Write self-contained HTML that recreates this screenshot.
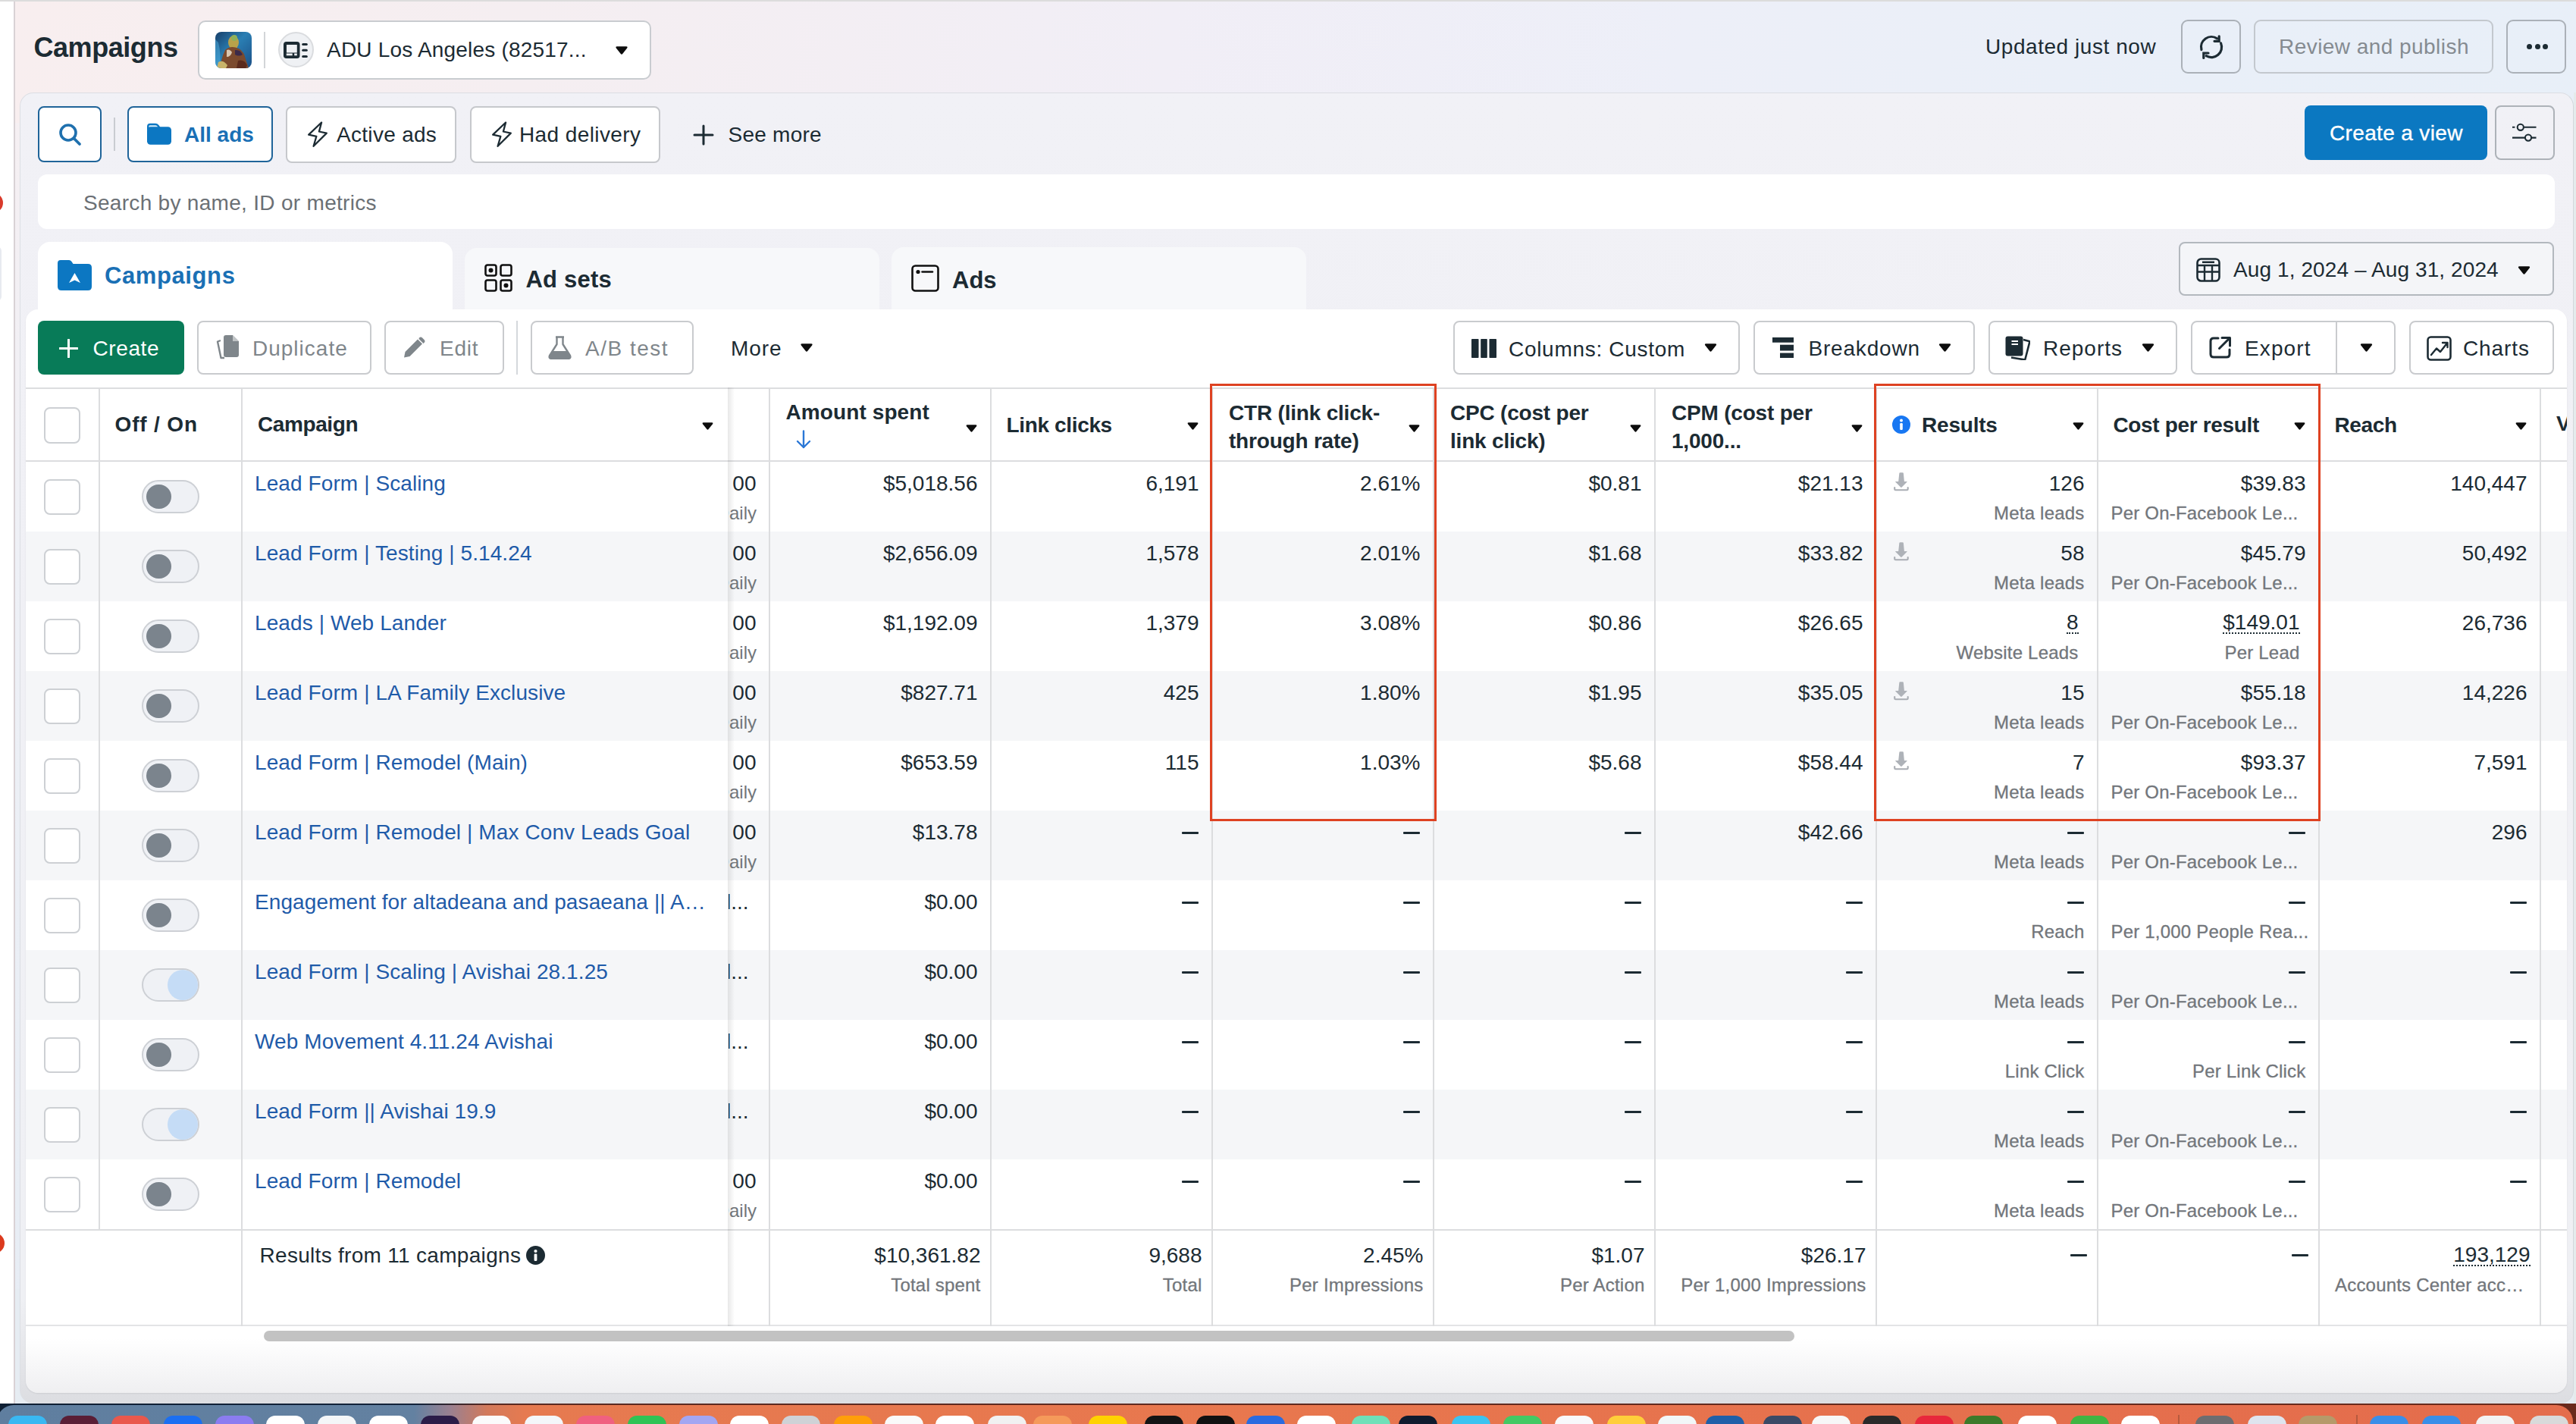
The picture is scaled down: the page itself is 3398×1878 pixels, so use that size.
<!DOCTYPE html><html><head><meta charset="utf-8"><title>Campaigns</title><style>
*{box-sizing:border-box;margin:0;padding:0}
html,body{width:3398px;height:1878px;overflow:hidden;background:#fff;font-family:"Liberation Sans",sans-serif;color:#1c2b33;position:relative}
.a{position:absolute}
.t{position:absolute;white-space:nowrap;line-height:1}
svg.a{display:block}
</style></head><body>
<div class="a" style="left:0px;top:0px;width:3398px;height:2px;background:#dcdcdc"></div>
<div class="a" style="left:18px;top:2px;width:1.5px;height:1850px;background:#d9d2d5"></div>
<div class="a" style="left:19.5px;top:2px;width:6px;height:1850px;background:linear-gradient(180deg,#f7eff1 0%,#eef0f6 40%,#e6ecf4 100%)"></div>
<div class="a" style="left:19.5px;top:2px;width:3378.5px;height:160px;background:linear-gradient(95deg,#f8eeef 0%,#f5eef1 20%,#f1eef6 45%,#edeff8 65%,#e9eff8 85%,#e8eff8 100%)"></div>
<div class="a" style="left:19.5px;top:1700px;width:3378.5px;height:152px;background:#e6ecf2"></div>
<div class="a" style="left:25.5px;top:122px;width:3369px;height:1729px;background:linear-gradient(180deg,#f1f1f6 0%,#f0f0f5 40%,#eff0f4 92%,#dcdde1 100%);border-top:1.5px solid #dcdee3;border-left:1.5px solid #dcdfe4;border-right:1.5px solid #d3d7db;border-radius:18px 18px 18px 18px"></div>
<div class="a" style="left:3395px;top:122px;width:3px;height:1730px;background:#e4ebec"></div>
<div class="a" style="left:-23px;top:254px;width:27px;height:27px;background:#d93a2b;border-radius:50%"></div>
<div class="a" style="left:-21px;top:1626px;width:27px;height:27px;background:#dc3a1e;border-radius:50%"></div>
<div class="a" style="left:-10px;top:325px;width:12px;height:72px;background:#e7eaf0;border-radius:6px"></div>
<div class="t" style="left:44.5px;top:44.5px;font-size:36px;color:#1c2b33;font-weight:bold;letter-spacing:-0.45px;">Campaigns</div>
<div class="a" style="left:261px;top:27px;width:598px;height:78px;background:#fff;border:2px solid #c9ccd0;border-radius:10px"></div>
<svg class="a" style="left:284px;top:42px;" width="48" height="48" viewBox="0 0 48 48"><defs><linearGradient id="avb" x1="0" y1="0" x2="1" y2="1"><stop offset="0" stop-color="#173f6a"/><stop offset="0.45" stop-color="#2a7fb4"/><stop offset="1" stop-color="#1c4f86"/></linearGradient><clipPath id="avc"><rect width="48" height="48" rx="8"/></clipPath></defs><g clip-path="url(#avc)"><rect width="48" height="48" fill="url(#avb)"/><path d="M4 14 Q8 30 6 48 H0 V10Z" fill="#4fb0df" opacity="0.5"/><ellipse cx="24" cy="14" rx="7" ry="9" fill="#b9a24a"/><ellipse cx="25" cy="8" rx="4" ry="4" fill="#8fb05a"/><path d="M13 24 Q20 17 31 22 Q38 26 40 36 L44 48 H8 Q6 38 13 24Z" fill="#7b4a2e"/><path d="M15 24 Q19 22 22 27 Q20 33 15 33Z" fill="#d9c6b0"/><path d="M26 24 Q33 23 36 30 Q31 33 26 30Z" fill="#3b2a4a"/><path d="M4 40 Q10 36 16 44 L14 48 H2Z" fill="#c9b46a"/><path d="M30 38 Q38 36 42 44 L40 48 H28Z" fill="#5a2a1c"/></g></svg>
<div class="a" style="left:348px;top:42px;width:2px;height:48px;background:#d3d5d8"></div>
<div class="a" style="left:366.5px;top:42.3px;width:47.2px;height:47.2px;background:#eff1f4;border:2px solid #dadcdf;border-radius:50%"></div>
<svg class="a" style="left:374px;top:55px;" width="33" height="23" viewBox="0 0 33 23"><path fill-rule="evenodd" fill="#1c2b33" d="M3.8 0 H17.7 Q21.5 0 21.5 3.8 V18.2 Q21.5 22 17.7 22 H3.8 Q0 22 0 18.2 V3.8 Q0 0 3.8 0Z M4 4 V14.5 H17.8 V4Z M3.8 15.6 V18.3 H11.7 V15.6Z M14.2 15.6 V18.3 H17.8 V15.6Z"/><rect x="24.2" y="2" width="7.6" height="3" rx="1.5" fill="#1c2b33"/><rect x="24.2" y="9.8" width="7.6" height="3" rx="1.5" fill="#1c2b33"/><rect x="24.2" y="18" width="7.6" height="3" rx="1.5" fill="#1c2b33"/></svg>
<div class="t" style="left:431px;top:52.3px;font-size:28px;color:#1c2b33;letter-spacing:0.2px;">ADU Los Angeles (82517...</div>
<svg class="a" style="left:811px;top:61px;" width="18" height="11" viewBox="0 0 15 10"><path d="M2 0.3 H13 Q15.2 0.3 14 2.2 L8.6 9.1 Q7.5 10.3 6.4 9.1 L1 2.2 Q-0.2 0.3 2 0.3Z" fill="#0d0d0d"/></svg>
<div class="t" style="left:2619px;top:48.3px;font-size:28px;color:#1c2b33;letter-spacing:0.55px;">Updated just now</div>
<div class="a" style="left:2877px;top:26px;width:79px;height:71px;border:2px solid #abb1b8;border-radius:9px"></div>
<svg class="a" style="left:2899px;top:44px;" width="36" height="36" viewBox="0 0 36 36"><path d="M4.96 21.5 A13.5 13.5 0 0 1 25.7 6.9" fill="none" stroke="#1c2b33" stroke-width="3.2" stroke-linecap="round"/><path d="M22 10.3 H28.2 V3.8" fill="none" stroke="#1c2b33" stroke-width="3.2" stroke-linecap="round" stroke-linejoin="miter"/><path d="M30.6 13 A13.5 13.5 0 0 1 11.2 29.7" fill="none" stroke="#1c2b33" stroke-width="3.2" stroke-linecap="round"/><path d="M14 26 H7.8 V32.4" fill="none" stroke="#1c2b33" stroke-width="3.2" stroke-linecap="round"/></svg>
<div class="a" style="left:2973px;top:26px;width:316px;height:71px;border:2px solid #c3c8ce;border-radius:9px"></div>
<div class="t" style="left:3006px;top:48.3px;font-size:28px;color:#858b91;letter-spacing:0.45px;">Review and publish</div>
<div class="a" style="left:3306px;top:26px;width:79px;height:71px;border:2px solid #abb1b8;border-radius:9px"></div>
<div class="a" style="left:3333.0px;top:58px;width:7px;height:7px;background:#1c2b33;border-radius:50%"></div>
<div class="a" style="left:3343.5px;top:58px;width:7px;height:7px;background:#1c2b33;border-radius:50%"></div>
<div class="a" style="left:3354.0px;top:58px;width:7px;height:7px;background:#1c2b33;border-radius:50%"></div>
<div class="a" style="left:50px;top:140px;width:84px;height:74px;background:#fff;border:2px solid #1f6499;border-radius:8px"></div>
<svg class="a" style="left:76px;top:161px;" width="34" height="34" viewBox="0 0 34 34"><circle cx="14" cy="14" r="10" fill="none" stroke="#1f70ae" stroke-width="3.6"/><path d="M21.5 21.5 L29 29" stroke="#1f70ae" stroke-width="3.8" stroke-linecap="round"/></svg>
<div class="a" style="left:150px;top:155px;width:2px;height:44px;background:#c9ccd1"></div>
<div class="a" style="left:168px;top:139.5px;width:192px;height:74px;background:#fff;border:2px solid #1f6499;border-radius:8px"></div>
<svg class="a" style="left:193px;top:162px;" width="34" height="30" viewBox="0 0 34 30"><path d="M2.2 9 V5 Q2.2 2 5.2 2 H12 Q14 2 15.3 3.6 L17.5 6.5" fill="#d9eefa" stroke="#0c77c2" stroke-width="2.4" stroke-linejoin="round"/><rect x="1" y="5.2" width="32" height="23.6" rx="4.5" fill="#0c77c2"/></svg>
<div class="t" style="left:243px;top:163.8px;font-size:28px;color:#1a70b5;font-weight:bold;">All ads</div>
<div class="a" style="left:377px;top:139.5px;width:225px;height:75px;background:#fff;border:2px solid #c6c8cc;border-radius:8px"></div>
<svg class="a" style="left:405px;top:159px;" width="28" height="36" viewBox="0 0 28 36"><path d="M19.1 2.5 L2.2 18.7 L12.4 20.8 L8.6 33.8 L25.8 16.6 L15.9 14.5 Z" fill="none" stroke="#1c2b33" stroke-width="2.3" stroke-linejoin="round"/></svg>
<div class="t" style="left:444px;top:163.8px;font-size:28px;color:#1c2b33;letter-spacing:0.3px;">Active ads</div>
<div class="a" style="left:620px;top:139.5px;width:251px;height:75px;background:#fff;border:2px solid #c6c8cc;border-radius:8px"></div>
<svg class="a" style="left:648px;top:159px;" width="28" height="36" viewBox="0 0 28 36"><path d="M19.1 2.5 L2.2 18.7 L12.4 20.8 L8.6 33.8 L25.8 16.6 L15.9 14.5 Z" fill="none" stroke="#1c2b33" stroke-width="2.3" stroke-linejoin="round"/></svg>
<div class="t" style="left:685px;top:163.8px;font-size:28px;color:#1c2b33;letter-spacing:0.4px;">Had delivery</div>
<svg class="a" style="left:914px;top:164px;" width="28" height="28" viewBox="0 0 28 28"><path d="M14 2 V26 M2 14 H26" stroke="#1c2b33" stroke-width="3" stroke-linecap="round"/></svg>
<div class="t" style="left:960.5px;top:164.3px;font-size:28px;color:#1c2b33;letter-spacing:0.25px;">See more</div>
<div class="a" style="left:3040px;top:139px;width:241px;height:72px;background:#0b78c1;border-radius:8px"></div>
<div class="t" style="left:3073px;top:162.3px;font-size:28px;color:#fff;letter-spacing:0.35px;-webkit-text-stroke:0.35px #fff;">Create a view</div>
<div class="a" style="left:3290.5px;top:139px;width:79px;height:72px;border:2px solid #adb2b8;border-radius:8px"></div>
<svg class="a" style="left:3312px;top:160px;" width="36" height="30" viewBox="0 0 36 30"><path d="M2 7.8 H5.4 M17.3 7.8 H33.5 M2 21.6 H18.2 M27.5 21.6 H33.5" stroke="#1c2b33" stroke-width="2.1"/><circle cx="12.8" cy="7.8" r="4.1" fill="none" stroke="#1c2b33" stroke-width="2.1"/><circle cx="23" cy="21.6" r="4.1" fill="none" stroke="#1c2b33" stroke-width="2.1"/></svg>
<div class="a" style="left:50px;top:230px;width:3320px;height:72px;background:#fff;border-radius:12px"></div>
<div class="t" style="left:110px;top:253.8px;font-size:28px;color:#6b7075;letter-spacing:0.3px;">Search by name, ID or metrics</div>
<div class="a" style="left:613px;top:327px;width:547px;height:90px;background:#f7f8fa;border-radius:16px 16px 0 0"></div>
<div class="a" style="left:1176px;top:326px;width:547px;height:90px;background:#f7f8fa;border-radius:16px 16px 0 0"></div>
<div class="a" style="left:50px;top:319px;width:547px;height:100px;background:#fff;border-radius:16px 16px 0 0"></div>
<svg class="a" style="left:76px;top:343px;" width="45" height="40" viewBox="0 0 45 40"><path d="M0 4 Q0 0 4 0 H15 Q17 0 18.5 2 L20.5 5 H40 Q45 5 45 10 V35 Q45 40 40 40 H5 Q0 40 0 35Z" fill="#0c77c2"/><path d="M22.5 17 L30 30 L22.5 26.5 L15 30Z" fill="#fff"/></svg>
<div class="t" style="left:138px;top:347.8px;font-size:31px;color:#1a70b5;font-weight:bold;letter-spacing:0.6px;">Campaigns</div>
<svg class="a" style="left:639px;top:348px;" width="37" height="37" viewBox="0 0 37 37"><rect x="1.5" y="1.5" width="14" height="14" rx="2.5" fill="none" stroke="#111" stroke-width="2.6"/><rect x="21.5" y="1.5" width="14" height="14" rx="2.5" fill="none" stroke="#111" stroke-width="2.6"/><rect x="1.5" y="21.5" width="14" height="14" rx="2.5" fill="none" stroke="#111" stroke-width="2.6"/><rect x="21.5" y="21.5" width="14" height="14" rx="2.5" fill="none" stroke="#111" stroke-width="2.6"/><circle cx="8.5" cy="8.5" r="3" fill="#111"/><circle cx="28.5" cy="28.5" r="3" fill="#111"/></svg>
<div class="t" style="left:693.5px;top:352.8px;font-size:31px;color:#1c2b33;font-weight:bold;letter-spacing:0.2px;">Ad sets</div>
<svg class="a" style="left:1202px;top:349px;" width="37" height="36" viewBox="0 0 37 36"><rect x="1.5" y="1.5" width="34" height="33" rx="4" fill="none" stroke="#111" stroke-width="2.6"/><circle cx="9" cy="9.5" r="2.6" fill="#111"/><path d="M14.5 9.5 H28" stroke="#111" stroke-width="2.6" stroke-linecap="round"/></svg>
<div class="t" style="left:1256px;top:353.8px;font-size:31px;color:#1c2b33;font-weight:bold;">Ads</div>
<div class="a" style="left:2874px;top:319px;width:495px;height:71px;background:#f4f5f8;border:2px solid #b3b8be;border-radius:8px"></div>
<svg class="a" style="left:2897px;top:340px;" width="32" height="32" viewBox="0 0 32 32"><rect x="1.5" y="1.5" width="29" height="29" rx="5" fill="none" stroke="#1c2b33" stroke-width="2.6"/><path d="M1.5 10 H30.5 M1.5 18.5 H30.5 M11 10 V30.5 M21 10 V30.5 M8 5.8 H24" stroke="#1c2b33" stroke-width="2.4"/></svg>
<div class="t" style="left:2946px;top:342.3px;font-size:28px;color:#1c2b33;letter-spacing:0.1px;">Aug 1, 2024 – Aug 31, 2024</div>
<svg class="a" style="left:3320px;top:351px;" width="19" height="11" viewBox="0 0 15 10"><path d="M2 0.3 H13 Q15.2 0.3 14 2.2 L8.6 9.1 Q7.5 10.3 6.4 9.1 L1 2.2 Q-0.2 0.3 2 0.3Z" fill="#0d0d0d"/></svg>
<div class="a" style="left:34px;top:408px;width:3352px;height:1429px;background:linear-gradient(180deg,#fff 0%,#fff 95%,#efeff1 100%);border-radius:16px;box-shadow:0 1px 2px rgba(0,0,0,0.08)"></div>
<div class="a" style="left:50px;top:400px;width:547px;height:30px;background:#fff"></div>
<div class="a" style="left:50px;top:423px;width:193px;height:71px;background:#087b58;border-radius:8px"></div>
<svg class="a" style="left:78px;top:447px;" width="25" height="25" viewBox="0 0 25 25"><path d="M12.5 1 V24 M1 12.5 H24" stroke="#fff" stroke-width="3" stroke-linecap="round"/></svg>
<div class="t" style="left:122.5px;top:445.8px;font-size:28px;color:#fff;letter-spacing:0.6px;">Create</div>
<div class="a" style="left:260px;top:423px;width:230px;height:71px;border:2px solid #c9cbce;border-radius:8px;background:#fff"></div>
<svg class="a" style="left:283px;top:441px;" width="33" height="33" viewBox="0 0 33 33"><path d="M8 8 L4 9.5 L8.5 31 L13 31" fill="none" stroke="#7f868b" stroke-width="2.4" stroke-linejoin="round"/><path d="M12 4 Q12 1 15 1 H24 L32 9 V27 Q32 30 29 30 H15 Q12 30 12 27Z" fill="#7f868b"/><path d="M24 1 V9 H32" fill="#fff" opacity="0.5"/></svg>
<div class="t" style="left:333px;top:445.8px;font-size:28px;color:#7f868b;letter-spacing:1.0px;">Duplicate</div>
<div class="a" style="left:507px;top:423px;width:158px;height:71px;border:2px solid #c9cbce;border-radius:8px;background:#fff"></div>
<svg class="a" style="left:531px;top:443px;" width="31" height="30" viewBox="0 0 31 30"><path d="M2 28.5 L3.5 21 L20 4.5 L26 10.5 L9.5 27Z" fill="#7f868b"/><path d="M22 2.5 Q24 0.5 26 2.5 L28.5 5 Q30.5 7 28.5 9 L27.5 10 L21.5 4Z" fill="#7f868b"/></svg>
<div class="t" style="left:580px;top:445.8px;font-size:28px;color:#7f868b;letter-spacing:0.8px;">Edit</div>
<div class="a" style="left:681px;top:423px;width:2px;height:71px;background:#d5d8dc"></div>
<div class="a" style="left:700px;top:423px;width:215px;height:71px;border:2px solid #c9cbce;border-radius:8px;background:#fff"></div>
<svg class="a" style="left:723px;top:443px;" width="31" height="31" viewBox="0 0 31 31"><path d="M10 1.5 H21 M11.5 1.5 V11 L2 26 Q0.5 30 5 30 H26 Q30.5 30 29 26 L19.5 11 V1.5" fill="none" stroke="#7f868b" stroke-width="2.4" stroke-linejoin="round"/><path d="M6.5 20 H24.5 L29 27 Q30 30 26 30 H5 Q1 30 2 27Z" fill="#7f868b"/></svg>
<div class="t" style="left:772px;top:445.8px;font-size:28px;color:#7f868b;letter-spacing:1.5px;">A/B test</div>
<div class="t" style="left:964px;top:445.8px;font-size:28px;color:#1c2b33;letter-spacing:0.9px;">More</div>
<svg class="a" style="left:1054px;top:453px;" width="20" height="11" viewBox="0 0 15 10"><path d="M2 0.3 H13 Q15.2 0.3 14 2.2 L8.6 9.1 Q7.5 10.3 6.4 9.1 L1 2.2 Q-0.2 0.3 2 0.3Z" fill="#0d0d0d"/></svg>
<div class="a" style="left:1917px;top:423px;width:378px;height:71px;border:2px solid #c9cbce;border-radius:8px;background:#fff"></div>
<svg class="a" style="left:1940.5px;top:446.5px;" width="33" height="25" viewBox="0 0 33 25"><rect x="0" y="0" width="9.5" height="25" rx="0.8" fill="#1c2b33"/><rect x="12.2" y="0" width="8.6" height="25" rx="0.8" fill="#1c2b33"/><rect x="23.5" y="0" width="9.5" height="25" rx="0.8" fill="#1c2b33"/></svg>
<div class="t" style="left:1990px;top:446.5px;font-size:28px;color:#1c2b33;letter-spacing:0.7px;">Columns: Custom</div>
<svg class="a" style="left:2247px;top:453px;" width="19" height="11" viewBox="0 0 15 10"><path d="M2 0.3 H13 Q15.2 0.3 14 2.2 L8.6 9.1 Q7.5 10.3 6.4 9.1 L1 2.2 Q-0.2 0.3 2 0.3Z" fill="#0d0d0d"/></svg>
<div class="a" style="left:2313px;top:423px;width:292px;height:71px;border:2px solid #c9cbce;border-radius:8px;background:#fff"></div>
<svg class="a" style="left:2338px;top:445px;" width="28" height="27" viewBox="0 0 28 27"><rect x="0" y="0" width="28" height="6.7" fill="#1c2b33"/><rect x="10" y="9.7" width="18" height="7.8" fill="#1c2b33"/><rect x="10" y="20.5" width="18" height="6.5" fill="#1c2b33"/></svg>
<div class="t" style="left:2385.5px;top:445.8px;font-size:28px;color:#1c2b33;letter-spacing:0.8px;">Breakdown</div>
<svg class="a" style="left:2556px;top:453px;" width="19" height="11" viewBox="0 0 15 10"><path d="M2 0.3 H13 Q15.2 0.3 14 2.2 L8.6 9.1 Q7.5 10.3 6.4 9.1 L1 2.2 Q-0.2 0.3 2 0.3Z" fill="#0d0d0d"/></svg>
<div class="a" style="left:2623px;top:423px;width:249px;height:71px;border:2px solid #c9cbce;border-radius:8px;background:#fff"></div>
<svg class="a" style="left:2645px;top:442.5px;" width="33" height="32" viewBox="0 0 33 32"><path d="M24 5 L31.5 7 Q32.5 7.3 32.2 8.4 L26.5 30.5 Q26.2 31.6 25 31.3 L8 28.5" fill="none" stroke="#1c2b33" stroke-width="2.6" stroke-linejoin="round"/><rect x="0.5" y="0.5" width="23" height="26" rx="3" fill="#1c2b33"/><path d="M8.5 7 H17 M8.5 11 H17" stroke="#fff" stroke-width="1.8"/></svg>
<div class="t" style="left:2695px;top:445.8px;font-size:28px;color:#1c2b33;letter-spacing:1.0px;">Reports</div>
<svg class="a" style="left:2824px;top:453px;" width="19" height="11" viewBox="0 0 15 10"><path d="M2 0.3 H13 Q15.2 0.3 14 2.2 L8.6 9.1 Q7.5 10.3 6.4 9.1 L1 2.2 Q-0.2 0.3 2 0.3Z" fill="#0d0d0d"/></svg>
<div class="a" style="left:2890px;top:423px;width:270px;height:71px;border:2px solid #c9cbce;border-radius:8px;background:#fff"></div>
<div class="a" style="left:3081px;top:425px;width:2px;height:67px;background:#c9cbce"></div>
<svg class="a" style="left:2914px;top:443px;" width="30" height="30" viewBox="0 0 30 30"><path d="M12 3 H6 Q2 3 2 7 V24 Q2 28 6 28 H23 Q27 28 27 24 V18" fill="none" stroke="#1c2b33" stroke-width="3" stroke-linecap="round"/><path d="M17 2.5 H27.5 V13 M27 3 L13.5 16.5" fill="none" stroke="#1c2b33" stroke-width="3" stroke-linecap="round" stroke-linejoin="round"/></svg>
<div class="t" style="left:2961px;top:445.8px;font-size:28px;color:#1c2b33;letter-spacing:1.1px;">Export</div>
<svg class="a" style="left:3112px;top:453px;" width="19" height="11" viewBox="0 0 15 10"><path d="M2 0.3 H13 Q15.2 0.3 14 2.2 L8.6 9.1 Q7.5 10.3 6.4 9.1 L1 2.2 Q-0.2 0.3 2 0.3Z" fill="#0d0d0d"/></svg>
<div class="a" style="left:3178px;top:423px;width:191px;height:71px;border:2px solid #c9cbce;border-radius:8px;background:#fff"></div>
<svg class="a" style="left:3200.5px;top:443px;" width="33" height="33" viewBox="0 0 33 33"><rect x="1.5" y="1.5" width="30" height="30" rx="4" fill="none" stroke="#1c2b33" stroke-width="2.6"/><path d="M6 25 L13 16.5 L18 21 L27 9.5 M21 9 H27.5 V15" fill="none" stroke="#1c2b33" stroke-width="2.4" stroke-linejoin="round" stroke-linecap="round"/></svg>
<div class="t" style="left:3249px;top:445.8px;font-size:28px;color:#1c2b33;letter-spacing:0.9px;">Charts</div>
<div class="a" style="left:34px;top:511px;width:3352px;height:2px;background:#dcdddf"></div>
<div class="a" style="left:34px;top:607px;width:3352px;height:2px;background:#dcdddf"></div>
<div class="a" style="left:34px;top:701px;width:3352px;height:92px;background:#f5f6f8"></div>
<div class="a" style="left:34px;top:885px;width:3352px;height:92px;background:#f5f6f8"></div>
<div class="a" style="left:34px;top:1069px;width:3352px;height:92px;background:#f5f6f8"></div>
<div class="a" style="left:34px;top:1253px;width:3352px;height:92px;background:#f5f6f8"></div>
<div class="a" style="left:34px;top:1437px;width:3352px;height:92px;background:#f5f6f8"></div>
<div class="a" style="left:34px;top:1621px;width:3352px;height:2px;background:#dcdddf"></div>
<div class="a" style="left:34px;top:1747px;width:3352px;height:2px;background:#e3e4e6"></div>
<div class="a" style="left:130px;top:511px;width:2px;height:1112px;background:#dcdddf"></div>
<div class="a" style="left:318px;top:511px;width:2px;height:1238px;background:#dcdddf"></div>
<div class="a" style="left:1014px;top:511px;width:2px;height:1238px;background:#dcdddf"></div>
<div class="a" style="left:1306px;top:511px;width:2px;height:1238px;background:#dcdddf"></div>
<div class="a" style="left:1598px;top:511px;width:2px;height:1238px;background:#dcdddf"></div>
<div class="a" style="left:1890px;top:511px;width:2px;height:1238px;background:#dcdddf"></div>
<div class="a" style="left:2182px;top:511px;width:2px;height:1238px;background:#dcdddf"></div>
<div class="a" style="left:2474px;top:511px;width:2px;height:1238px;background:#dcdddf"></div>
<div class="a" style="left:2766px;top:511px;width:2px;height:1238px;background:#dcdddf"></div>
<div class="a" style="left:3058px;top:511px;width:2px;height:1238px;background:#dcdddf"></div>
<div class="a" style="left:3350px;top:511px;width:2px;height:1238px;background:#dcdddf"></div>
<div class="a" style="left:58px;top:537px;width:47.5px;height:47.5px;background:#fff;border:2px solid #cdd0d4;border-radius:8px"></div>
<div class="t" style="left:151.5px;top:546.3px;font-size:28px;color:#1c2b33;font-weight:bold;letter-spacing:0.85px;">Off / On</div>
<div class="t" style="left:340px;top:546.3px;font-size:28px;color:#1c2b33;font-weight:bold;letter-spacing:-0.4px;">Campaign</div>
<svg class="a" style="left:926px;top:557px;" width="15" height="10" viewBox="0 0 15 10"><path d="M2 0.3 H13 Q15.2 0.3 14 2.2 L8.6 9.1 Q7.5 10.3 6.4 9.1 L1 2.2 Q-0.2 0.3 2 0.3Z" fill="#0d0d0d"/></svg>
<div class="t" style="left:1036.5px;top:530.3px;font-size:28px;color:#1c2b33;font-weight:bold;letter-spacing:0.1px;">Amount spent</div>
<svg class="a" style="left:1050px;top:567px;" width="20" height="25" viewBox="0 0 20 25"><path d="M10 1.5 V23 M2 15 L10 23 L18 15" fill="none" stroke="#2a77d6" stroke-width="2.4" stroke-linecap="round" stroke-linejoin="round"/></svg>
<svg class="a" style="left:1274px;top:560px;" width="15" height="10" viewBox="0 0 15 10"><path d="M2 0.3 H13 Q15.2 0.3 14 2.2 L8.6 9.1 Q7.5 10.3 6.4 9.1 L1 2.2 Q-0.2 0.3 2 0.3Z" fill="#0d0d0d"/></svg>
<div class="t" style="left:1327.5px;top:546.8px;font-size:28px;color:#1c2b33;font-weight:bold;letter-spacing:-0.35px;">Link clicks</div>
<svg class="a" style="left:1566px;top:557px;" width="15" height="10" viewBox="0 0 15 10"><path d="M2 0.3 H13 Q15.2 0.3 14 2.2 L8.6 9.1 Q7.5 10.3 6.4 9.1 L1 2.2 Q-0.2 0.3 2 0.3Z" fill="#0d0d0d"/></svg>
<div class="t" style="left:1621px;top:531.3px;font-size:28px;color:#1c2b33;font-weight:bold;letter-spacing:-0.2px;">CTR (link click-</div>
<div class="t" style="left:1621px;top:568.3px;font-size:28px;color:#1c2b33;font-weight:bold;letter-spacing:-0.2px;">through rate)</div>
<svg class="a" style="left:1858px;top:560px;" width="15" height="10" viewBox="0 0 15 10"><path d="M2 0.3 H13 Q15.2 0.3 14 2.2 L8.6 9.1 Q7.5 10.3 6.4 9.1 L1 2.2 Q-0.2 0.3 2 0.3Z" fill="#0d0d0d"/></svg>
<div class="t" style="left:1913px;top:531.3px;font-size:28px;color:#1c2b33;font-weight:bold;letter-spacing:-0.2px;">CPC (cost per</div>
<div class="t" style="left:1913px;top:568.3px;font-size:28px;color:#1c2b33;font-weight:bold;letter-spacing:-0.2px;">link click)</div>
<svg class="a" style="left:2150px;top:560px;" width="15" height="10" viewBox="0 0 15 10"><path d="M2 0.3 H13 Q15.2 0.3 14 2.2 L8.6 9.1 Q7.5 10.3 6.4 9.1 L1 2.2 Q-0.2 0.3 2 0.3Z" fill="#0d0d0d"/></svg>
<div class="t" style="left:2205px;top:531.3px;font-size:28px;color:#1c2b33;font-weight:bold;letter-spacing:-0.2px;">CPM (cost per</div>
<div class="t" style="left:2205px;top:568.3px;font-size:28px;color:#1c2b33;font-weight:bold;letter-spacing:-0.2px;">1,000...</div>
<svg class="a" style="left:2442px;top:560px;" width="15" height="10" viewBox="0 0 15 10"><path d="M2 0.3 H13 Q15.2 0.3 14 2.2 L8.6 9.1 Q7.5 10.3 6.4 9.1 L1 2.2 Q-0.2 0.3 2 0.3Z" fill="#0d0d0d"/></svg>
<svg class="a" style="left:2496px;top:548px;" width="24" height="24" viewBox="0 0 24 24"><circle cx="12" cy="12" r="12" fill="#1877f2"/><circle cx="12" cy="6.5" r="2" fill="#fff"/><rect x="10.2" y="10" width="3.6" height="9" rx="1.2" fill="#fff"/></svg>
<div class="t" style="left:2535px;top:546.8px;font-size:28px;color:#1c2b33;font-weight:bold;letter-spacing:-0.2px;">Results</div>
<svg class="a" style="left:2734px;top:557px;" width="15" height="10" viewBox="0 0 15 10"><path d="M2 0.3 H13 Q15.2 0.3 14 2.2 L8.6 9.1 Q7.5 10.3 6.4 9.1 L1 2.2 Q-0.2 0.3 2 0.3Z" fill="#0d0d0d"/></svg>
<div class="t" style="left:2787.5px;top:546.8px;font-size:28px;color:#1c2b33;font-weight:bold;letter-spacing:-0.35px;">Cost per result</div>
<svg class="a" style="left:3026px;top:557px;" width="15" height="10" viewBox="0 0 15 10"><path d="M2 0.3 H13 Q15.2 0.3 14 2.2 L8.6 9.1 Q7.5 10.3 6.4 9.1 L1 2.2 Q-0.2 0.3 2 0.3Z" fill="#0d0d0d"/></svg>
<div class="t" style="left:3079.5px;top:546.8px;font-size:28px;color:#1c2b33;font-weight:bold;letter-spacing:-0.35px;">Reach</div>
<svg class="a" style="left:3318px;top:557px;" width="15" height="10" viewBox="0 0 15 10"><path d="M2 0.3 H13 Q15.2 0.3 14 2.2 L8.6 9.1 Q7.5 10.3 6.4 9.1 L1 2.2 Q-0.2 0.3 2 0.3Z" fill="#0d0d0d"/></svg>
<div class="a" style="left:3352px;top:520px;width:34px;height:80px;overflow:hidden"><div class="t" style="left:20px;top:25.3px;font-size:28px;font-weight:bold">V</div></div>
<div class="a" style="left:961px;top:609px;width:53px;height:1012px;overflow:hidden"><div class="t" style="right:16.5px;top:15.3px;font-size:28px;text-align:right">00</div><div class="t" style="right:16px;top:56.2px;font-size:24px;color:#72767b;text-align:right">Daily</div><div class="t" style="right:16.5px;top:107.3px;font-size:28px;text-align:right">00</div><div class="t" style="right:16px;top:148.2px;font-size:24px;color:#72767b;text-align:right">Daily</div><div class="t" style="right:16.5px;top:199.3px;font-size:28px;text-align:right">00</div><div class="t" style="right:16px;top:240.2px;font-size:24px;color:#72767b;text-align:right">Daily</div><div class="t" style="right:16.5px;top:291.3px;font-size:28px;text-align:right">00</div><div class="t" style="right:16px;top:332.2px;font-size:24px;color:#72767b;text-align:right">Daily</div><div class="t" style="right:16.5px;top:383.3px;font-size:28px;text-align:right">00</div><div class="t" style="right:16px;top:424.2px;font-size:24px;color:#72767b;text-align:right">Daily</div><div class="t" style="right:16.5px;top:475.3px;font-size:28px;text-align:right">00</div><div class="t" style="right:16px;top:516.2px;font-size:24px;color:#72767b;text-align:right">Daily</div><div class="t" style="right:26.5px;top:567.3px;font-size:28px;text-align:right">Ad set level...</div><div class="t" style="right:26.5px;top:659.3px;font-size:28px;text-align:right">Ad set level...</div><div class="t" style="right:26.5px;top:751.3px;font-size:28px;text-align:right">Ad set level...</div><div class="t" style="right:26.5px;top:843.3px;font-size:28px;text-align:right">Ad set level...</div><div class="t" style="right:16.5px;top:935.3px;font-size:28px;text-align:right">00</div><div class="t" style="right:16px;top:976.2px;font-size:24px;color:#72767b;text-align:right">Daily</div></div>
<div class="t" style="right:2108.5px;top:624.3px;font-size:28px;color:#1c2b33;text-align:right;">$5,018.56</div>
<div class="t" style="right:1816.5px;top:624.3px;font-size:28px;color:#1c2b33;text-align:right;">6,191</div>
<div class="t" style="right:1524.5px;top:624.3px;font-size:28px;color:#1c2b33;text-align:right;">2.61%</div>
<div class="t" style="right:1232.5px;top:624.3px;font-size:28px;color:#1c2b33;text-align:right;">$0.81</div>
<div class="t" style="right:940.5px;top:624.3px;font-size:28px;color:#1c2b33;text-align:right;">$21.13</div>
<svg class="a" style="left:2496px;top:620px;" width="24" height="28" viewBox="0 0 24 28"><path d="M9.3 4.5 Q9.3 3.2 10.6 3.2 H13.6 Q14.9 3.2 14.9 4.5 L15.9 14.9 H19.3 Q20.2 14.9 19.6 15.6 L12.7 22.6 Q11.9 23.4 11.1 22.6 L4.2 15.6 Q3.6 14.9 4.5 14.9 H8.2 Z" fill="#aeb2b8"/><path d="M3.2 23 V25 Q3.2 26.3 4.5 26.3 H19.4 Q20.7 26.3 20.7 25 V23" fill="none" stroke="#a9adb3" stroke-width="2.1" stroke-linecap="round"/></svg>
<div class="t" style="right:648.5px;top:624.3px;font-size:28px;color:#1c2b33;text-align:right;">126</div>
<div class="t" style="right:648.5px;top:665.2px;font-size:24px;color:#72767b;text-align:right;letter-spacing:0.2px;-webkit-text-stroke:0.3px #72767b;">Meta leads</div>
<div class="t" style="right:356.5px;top:624.3px;font-size:28px;color:#1c2b33;text-align:right;">$39.83</div>
<div class="t" style="left:2784.5px;top:665.2px;font-size:24px;color:#72767b;letter-spacing:0.2px;-webkit-text-stroke:0.3px #72767b;">Per On-Facebook Le...</div>
<div class="t" style="right:64.5px;top:624.3px;font-size:28px;color:#1c2b33;text-align:right;">140,447</div>
<div class="t" style="right:2108.5px;top:716.3px;font-size:28px;color:#1c2b33;text-align:right;">$2,656.09</div>
<div class="t" style="right:1816.5px;top:716.3px;font-size:28px;color:#1c2b33;text-align:right;">1,578</div>
<div class="t" style="right:1524.5px;top:716.3px;font-size:28px;color:#1c2b33;text-align:right;">2.01%</div>
<div class="t" style="right:1232.5px;top:716.3px;font-size:28px;color:#1c2b33;text-align:right;">$1.68</div>
<div class="t" style="right:940.5px;top:716.3px;font-size:28px;color:#1c2b33;text-align:right;">$33.82</div>
<svg class="a" style="left:2496px;top:712px;" width="24" height="28" viewBox="0 0 24 28"><path d="M9.3 4.5 Q9.3 3.2 10.6 3.2 H13.6 Q14.9 3.2 14.9 4.5 L15.9 14.9 H19.3 Q20.2 14.9 19.6 15.6 L12.7 22.6 Q11.9 23.4 11.1 22.6 L4.2 15.6 Q3.6 14.9 4.5 14.9 H8.2 Z" fill="#aeb2b8"/><path d="M3.2 23 V25 Q3.2 26.3 4.5 26.3 H19.4 Q20.7 26.3 20.7 25 V23" fill="none" stroke="#a9adb3" stroke-width="2.1" stroke-linecap="round"/></svg>
<div class="t" style="right:648.5px;top:716.3px;font-size:28px;color:#1c2b33;text-align:right;">58</div>
<div class="t" style="right:648.5px;top:757.2px;font-size:24px;color:#72767b;text-align:right;letter-spacing:0.2px;-webkit-text-stroke:0.3px #72767b;">Meta leads</div>
<div class="t" style="right:356.5px;top:716.3px;font-size:28px;color:#1c2b33;text-align:right;">$45.79</div>
<div class="t" style="left:2784.5px;top:757.2px;font-size:24px;color:#72767b;letter-spacing:0.2px;-webkit-text-stroke:0.3px #72767b;">Per On-Facebook Le...</div>
<div class="t" style="right:64.5px;top:716.3px;font-size:28px;color:#1c2b33;text-align:right;">50,492</div>
<div class="t" style="right:2108.5px;top:808.3px;font-size:28px;color:#1c2b33;text-align:right;">$1,192.09</div>
<div class="t" style="right:1816.5px;top:808.3px;font-size:28px;color:#1c2b33;text-align:right;">1,379</div>
<div class="t" style="right:1524.5px;top:808.3px;font-size:28px;color:#1c2b33;text-align:right;">3.08%</div>
<div class="t" style="right:1232.5px;top:808.3px;font-size:28px;color:#1c2b33;text-align:right;">$0.86</div>
<div class="t" style="right:940.5px;top:808.3px;font-size:28px;color:#1c2b33;text-align:right;">$26.65</div>
<div class="t" style="right:656.5px;top:808.3px;font-size:28px;color:#1c2b33;text-align:right;border-bottom:2.5px dotted #1c2b33;padding-bottom:0px;line-height:0.93;">8</div>
<div class="t" style="right:656.5px;top:849.2px;font-size:24px;color:#72767b;text-align:right;letter-spacing:0.2px;-webkit-text-stroke:0.3px #72767b;">Website Leads</div>
<div class="t" style="right:364.5px;top:808.3px;font-size:28px;color:#1c2b33;text-align:right;border-bottom:2.5px dotted #1c2b33;padding-bottom:0px;line-height:0.93;">$149.01</div>
<div class="t" style="right:364.5px;top:849.2px;font-size:24px;color:#72767b;text-align:right;letter-spacing:0.2px;-webkit-text-stroke:0.3px #72767b;">Per Lead</div>
<div class="t" style="right:64.5px;top:808.3px;font-size:28px;color:#1c2b33;text-align:right;">26,736</div>
<div class="t" style="right:2108.5px;top:900.3px;font-size:28px;color:#1c2b33;text-align:right;">$827.71</div>
<div class="t" style="right:1816.5px;top:900.3px;font-size:28px;color:#1c2b33;text-align:right;">425</div>
<div class="t" style="right:1524.5px;top:900.3px;font-size:28px;color:#1c2b33;text-align:right;">1.80%</div>
<div class="t" style="right:1232.5px;top:900.3px;font-size:28px;color:#1c2b33;text-align:right;">$1.95</div>
<div class="t" style="right:940.5px;top:900.3px;font-size:28px;color:#1c2b33;text-align:right;">$35.05</div>
<svg class="a" style="left:2496px;top:896px;" width="24" height="28" viewBox="0 0 24 28"><path d="M9.3 4.5 Q9.3 3.2 10.6 3.2 H13.6 Q14.9 3.2 14.9 4.5 L15.9 14.9 H19.3 Q20.2 14.9 19.6 15.6 L12.7 22.6 Q11.9 23.4 11.1 22.6 L4.2 15.6 Q3.6 14.9 4.5 14.9 H8.2 Z" fill="#aeb2b8"/><path d="M3.2 23 V25 Q3.2 26.3 4.5 26.3 H19.4 Q20.7 26.3 20.7 25 V23" fill="none" stroke="#a9adb3" stroke-width="2.1" stroke-linecap="round"/></svg>
<div class="t" style="right:648.5px;top:900.3px;font-size:28px;color:#1c2b33;text-align:right;">15</div>
<div class="t" style="right:648.5px;top:941.2px;font-size:24px;color:#72767b;text-align:right;letter-spacing:0.2px;-webkit-text-stroke:0.3px #72767b;">Meta leads</div>
<div class="t" style="right:356.5px;top:900.3px;font-size:28px;color:#1c2b33;text-align:right;">$55.18</div>
<div class="t" style="left:2784.5px;top:941.2px;font-size:24px;color:#72767b;letter-spacing:0.2px;-webkit-text-stroke:0.3px #72767b;">Per On-Facebook Le...</div>
<div class="t" style="right:64.5px;top:900.3px;font-size:28px;color:#1c2b33;text-align:right;">14,226</div>
<div class="t" style="right:2108.5px;top:992.3px;font-size:28px;color:#1c2b33;text-align:right;">$653.59</div>
<div class="t" style="right:1816.5px;top:992.3px;font-size:28px;color:#1c2b33;text-align:right;">115</div>
<div class="t" style="right:1524.5px;top:992.3px;font-size:28px;color:#1c2b33;text-align:right;">1.03%</div>
<div class="t" style="right:1232.5px;top:992.3px;font-size:28px;color:#1c2b33;text-align:right;">$5.68</div>
<div class="t" style="right:940.5px;top:992.3px;font-size:28px;color:#1c2b33;text-align:right;">$58.44</div>
<svg class="a" style="left:2496px;top:988px;" width="24" height="28" viewBox="0 0 24 28"><path d="M9.3 4.5 Q9.3 3.2 10.6 3.2 H13.6 Q14.9 3.2 14.9 4.5 L15.9 14.9 H19.3 Q20.2 14.9 19.6 15.6 L12.7 22.6 Q11.9 23.4 11.1 22.6 L4.2 15.6 Q3.6 14.9 4.5 14.9 H8.2 Z" fill="#aeb2b8"/><path d="M3.2 23 V25 Q3.2 26.3 4.5 26.3 H19.4 Q20.7 26.3 20.7 25 V23" fill="none" stroke="#a9adb3" stroke-width="2.1" stroke-linecap="round"/></svg>
<div class="t" style="right:648.5px;top:992.3px;font-size:28px;color:#1c2b33;text-align:right;">7</div>
<div class="t" style="right:648.5px;top:1033.2px;font-size:24px;color:#72767b;text-align:right;letter-spacing:0.2px;-webkit-text-stroke:0.3px #72767b;">Meta leads</div>
<div class="t" style="right:356.5px;top:992.3px;font-size:28px;color:#1c2b33;text-align:right;">$93.37</div>
<div class="t" style="left:2784.5px;top:1033.2px;font-size:24px;color:#72767b;letter-spacing:0.2px;-webkit-text-stroke:0.3px #72767b;">Per On-Facebook Le...</div>
<div class="t" style="right:64.5px;top:992.3px;font-size:28px;color:#1c2b33;text-align:right;">7,591</div>
<div class="t" style="right:2108.5px;top:1084.3px;font-size:28px;color:#1c2b33;text-align:right;">$13.78</div>
<div class="a" style="left:1558.5px;top:1097px;width:22px;height:3px;background:#1c2b33;border-radius:1px"></div>
<div class="a" style="left:1850.5px;top:1097px;width:22px;height:3px;background:#1c2b33;border-radius:1px"></div>
<div class="a" style="left:2142.5px;top:1097px;width:22px;height:3px;background:#1c2b33;border-radius:1px"></div>
<div class="t" style="right:940.5px;top:1084.3px;font-size:28px;color:#1c2b33;text-align:right;">$42.66</div>
<div class="a" style="left:2726.5px;top:1097px;width:22px;height:3px;background:#1c2b33;border-radius:1px"></div>
<div class="t" style="right:648.5px;top:1125.2px;font-size:24px;color:#72767b;text-align:right;letter-spacing:0.2px;-webkit-text-stroke:0.3px #72767b;">Meta leads</div>
<div class="a" style="left:3018.5px;top:1097px;width:22px;height:3px;background:#1c2b33;border-radius:1px"></div>
<div class="t" style="left:2784.5px;top:1125.2px;font-size:24px;color:#72767b;letter-spacing:0.2px;-webkit-text-stroke:0.3px #72767b;">Per On-Facebook Le...</div>
<div class="t" style="right:64.5px;top:1084.3px;font-size:28px;color:#1c2b33;text-align:right;">296</div>
<div class="t" style="right:2108.5px;top:1176.3px;font-size:28px;color:#1c2b33;text-align:right;">$0.00</div>
<div class="a" style="left:1558.5px;top:1189px;width:22px;height:3px;background:#1c2b33;border-radius:1px"></div>
<div class="a" style="left:1850.5px;top:1189px;width:22px;height:3px;background:#1c2b33;border-radius:1px"></div>
<div class="a" style="left:2142.5px;top:1189px;width:22px;height:3px;background:#1c2b33;border-radius:1px"></div>
<div class="a" style="left:2434.5px;top:1189px;width:22px;height:3px;background:#1c2b33;border-radius:1px"></div>
<div class="a" style="left:2726.5px;top:1189px;width:22px;height:3px;background:#1c2b33;border-radius:1px"></div>
<div class="t" style="right:648.5px;top:1217.2px;font-size:24px;color:#72767b;text-align:right;letter-spacing:0.2px;-webkit-text-stroke:0.3px #72767b;">Reach</div>
<div class="a" style="left:3018.5px;top:1189px;width:22px;height:3px;background:#1c2b33;border-radius:1px"></div>
<div class="t" style="left:2784.5px;top:1217.2px;font-size:24px;color:#72767b;letter-spacing:0.2px;-webkit-text-stroke:0.3px #72767b;">Per 1,000 People Rea...</div>
<div class="a" style="left:3310.5px;top:1189px;width:22px;height:3px;background:#1c2b33;border-radius:1px"></div>
<div class="t" style="right:2108.5px;top:1268.3px;font-size:28px;color:#1c2b33;text-align:right;">$0.00</div>
<div class="a" style="left:1558.5px;top:1281px;width:22px;height:3px;background:#1c2b33;border-radius:1px"></div>
<div class="a" style="left:1850.5px;top:1281px;width:22px;height:3px;background:#1c2b33;border-radius:1px"></div>
<div class="a" style="left:2142.5px;top:1281px;width:22px;height:3px;background:#1c2b33;border-radius:1px"></div>
<div class="a" style="left:2434.5px;top:1281px;width:22px;height:3px;background:#1c2b33;border-radius:1px"></div>
<div class="a" style="left:2726.5px;top:1281px;width:22px;height:3px;background:#1c2b33;border-radius:1px"></div>
<div class="t" style="right:648.5px;top:1309.2px;font-size:24px;color:#72767b;text-align:right;letter-spacing:0.2px;-webkit-text-stroke:0.3px #72767b;">Meta leads</div>
<div class="a" style="left:3018.5px;top:1281px;width:22px;height:3px;background:#1c2b33;border-radius:1px"></div>
<div class="t" style="left:2784.5px;top:1309.2px;font-size:24px;color:#72767b;letter-spacing:0.2px;-webkit-text-stroke:0.3px #72767b;">Per On-Facebook Le...</div>
<div class="a" style="left:3310.5px;top:1281px;width:22px;height:3px;background:#1c2b33;border-radius:1px"></div>
<div class="t" style="right:2108.5px;top:1360.3px;font-size:28px;color:#1c2b33;text-align:right;">$0.00</div>
<div class="a" style="left:1558.5px;top:1373px;width:22px;height:3px;background:#1c2b33;border-radius:1px"></div>
<div class="a" style="left:1850.5px;top:1373px;width:22px;height:3px;background:#1c2b33;border-radius:1px"></div>
<div class="a" style="left:2142.5px;top:1373px;width:22px;height:3px;background:#1c2b33;border-radius:1px"></div>
<div class="a" style="left:2434.5px;top:1373px;width:22px;height:3px;background:#1c2b33;border-radius:1px"></div>
<div class="a" style="left:2726.5px;top:1373px;width:22px;height:3px;background:#1c2b33;border-radius:1px"></div>
<div class="t" style="right:648.5px;top:1401.2px;font-size:24px;color:#72767b;text-align:right;letter-spacing:0.2px;-webkit-text-stroke:0.3px #72767b;">Link Click</div>
<div class="a" style="left:3018.5px;top:1373px;width:22px;height:3px;background:#1c2b33;border-radius:1px"></div>
<div class="t" style="right:356.5px;top:1401.2px;font-size:24px;color:#72767b;text-align:right;letter-spacing:0.2px;-webkit-text-stroke:0.3px #72767b;">Per Link Click</div>
<div class="a" style="left:3310.5px;top:1373px;width:22px;height:3px;background:#1c2b33;border-radius:1px"></div>
<div class="t" style="right:2108.5px;top:1452.3px;font-size:28px;color:#1c2b33;text-align:right;">$0.00</div>
<div class="a" style="left:1558.5px;top:1465px;width:22px;height:3px;background:#1c2b33;border-radius:1px"></div>
<div class="a" style="left:1850.5px;top:1465px;width:22px;height:3px;background:#1c2b33;border-radius:1px"></div>
<div class="a" style="left:2142.5px;top:1465px;width:22px;height:3px;background:#1c2b33;border-radius:1px"></div>
<div class="a" style="left:2434.5px;top:1465px;width:22px;height:3px;background:#1c2b33;border-radius:1px"></div>
<div class="a" style="left:2726.5px;top:1465px;width:22px;height:3px;background:#1c2b33;border-radius:1px"></div>
<div class="t" style="right:648.5px;top:1493.2px;font-size:24px;color:#72767b;text-align:right;letter-spacing:0.2px;-webkit-text-stroke:0.3px #72767b;">Meta leads</div>
<div class="a" style="left:3018.5px;top:1465px;width:22px;height:3px;background:#1c2b33;border-radius:1px"></div>
<div class="t" style="left:2784.5px;top:1493.2px;font-size:24px;color:#72767b;letter-spacing:0.2px;-webkit-text-stroke:0.3px #72767b;">Per On-Facebook Le...</div>
<div class="a" style="left:3310.5px;top:1465px;width:22px;height:3px;background:#1c2b33;border-radius:1px"></div>
<div class="t" style="right:2108.5px;top:1544.3px;font-size:28px;color:#1c2b33;text-align:right;">$0.00</div>
<div class="a" style="left:1558.5px;top:1557px;width:22px;height:3px;background:#1c2b33;border-radius:1px"></div>
<div class="a" style="left:1850.5px;top:1557px;width:22px;height:3px;background:#1c2b33;border-radius:1px"></div>
<div class="a" style="left:2142.5px;top:1557px;width:22px;height:3px;background:#1c2b33;border-radius:1px"></div>
<div class="a" style="left:2434.5px;top:1557px;width:22px;height:3px;background:#1c2b33;border-radius:1px"></div>
<div class="a" style="left:2726.5px;top:1557px;width:22px;height:3px;background:#1c2b33;border-radius:1px"></div>
<div class="t" style="right:648.5px;top:1585.2px;font-size:24px;color:#72767b;text-align:right;letter-spacing:0.2px;-webkit-text-stroke:0.3px #72767b;">Meta leads</div>
<div class="a" style="left:3018.5px;top:1557px;width:22px;height:3px;background:#1c2b33;border-radius:1px"></div>
<div class="t" style="left:2784.5px;top:1585.2px;font-size:24px;color:#72767b;letter-spacing:0.2px;-webkit-text-stroke:0.3px #72767b;">Per On-Facebook Le...</div>
<div class="a" style="left:3310.5px;top:1557px;width:22px;height:3px;background:#1c2b33;border-radius:1px"></div>
<div class="a" style="left:960px;top:511px;width:9px;height:1238px;background:linear-gradient(90deg,rgba(0,0,0,0.09),rgba(0,0,0,0))"></div>
<div class="a" style="left:58px;top:631.5px;width:47.5px;height:47.5px;background:#fff;border:2px solid #cdd0d4;border-radius:8px"></div>
<div class="a" style="left:187px;top:633px;width:75.5px;height:43.5px;background:#eff1f5;border:2px solid #cdd0d5;border-radius:22px"></div>
<div class="a" style="left:193px;top:638.5px;width:32.5px;height:32.5px;background:#7b848d;border-radius:50%"></div>
<div class="t" style="left:336px;top:624.3px;font-size:28px;color:#1f5ba9;letter-spacing:0.1px;">Lead Form | Scaling</div>
<div class="a" style="left:58px;top:723.5px;width:47.5px;height:47.5px;background:#fff;border:2px solid #cdd0d4;border-radius:8px"></div>
<div class="a" style="left:187px;top:725px;width:75.5px;height:43.5px;background:#eff1f5;border:2px solid #cdd0d5;border-radius:22px"></div>
<div class="a" style="left:193px;top:730.5px;width:32.5px;height:32.5px;background:#7b848d;border-radius:50%"></div>
<div class="t" style="left:336px;top:716.3px;font-size:28px;color:#1f5ba9;letter-spacing:0.1px;">Lead Form | Testing | 5.14.24</div>
<div class="a" style="left:58px;top:815.5px;width:47.5px;height:47.5px;background:#fff;border:2px solid #cdd0d4;border-radius:8px"></div>
<div class="a" style="left:187px;top:817px;width:75.5px;height:43.5px;background:#eff1f5;border:2px solid #cdd0d5;border-radius:22px"></div>
<div class="a" style="left:193px;top:822.5px;width:32.5px;height:32.5px;background:#7b848d;border-radius:50%"></div>
<div class="t" style="left:336px;top:808.3px;font-size:28px;color:#1f5ba9;letter-spacing:0.1px;">Leads | Web Lander</div>
<div class="a" style="left:58px;top:907.5px;width:47.5px;height:47.5px;background:#fff;border:2px solid #cdd0d4;border-radius:8px"></div>
<div class="a" style="left:187px;top:909px;width:75.5px;height:43.5px;background:#eff1f5;border:2px solid #cdd0d5;border-radius:22px"></div>
<div class="a" style="left:193px;top:914.5px;width:32.5px;height:32.5px;background:#7b848d;border-radius:50%"></div>
<div class="t" style="left:336px;top:900.3px;font-size:28px;color:#1f5ba9;letter-spacing:0.1px;">Lead Form | LA Family Exclusive</div>
<div class="a" style="left:58px;top:999.5px;width:47.5px;height:47.5px;background:#fff;border:2px solid #cdd0d4;border-radius:8px"></div>
<div class="a" style="left:187px;top:1001px;width:75.5px;height:43.5px;background:#eff1f5;border:2px solid #cdd0d5;border-radius:22px"></div>
<div class="a" style="left:193px;top:1006.5px;width:32.5px;height:32.5px;background:#7b848d;border-radius:50%"></div>
<div class="t" style="left:336px;top:992.3px;font-size:28px;color:#1f5ba9;letter-spacing:0.1px;">Lead Form | Remodel (Main)</div>
<div class="a" style="left:58px;top:1091.5px;width:47.5px;height:47.5px;background:#fff;border:2px solid #cdd0d4;border-radius:8px"></div>
<div class="a" style="left:187px;top:1093px;width:75.5px;height:43.5px;background:#eff1f5;border:2px solid #cdd0d5;border-radius:22px"></div>
<div class="a" style="left:193px;top:1098.5px;width:32.5px;height:32.5px;background:#7b848d;border-radius:50%"></div>
<div class="t" style="left:336px;top:1084.3px;font-size:28px;color:#1f5ba9;letter-spacing:0.1px;">Lead Form | Remodel | Max Conv Leads Goal</div>
<div class="a" style="left:58px;top:1183.5px;width:47.5px;height:47.5px;background:#fff;border:2px solid #cdd0d4;border-radius:8px"></div>
<div class="a" style="left:187px;top:1185px;width:75.5px;height:43.5px;background:#eff1f5;border:2px solid #cdd0d5;border-radius:22px"></div>
<div class="a" style="left:193px;top:1190.5px;width:32.5px;height:32.5px;background:#7b848d;border-radius:50%"></div>
<div class="t" style="left:336px;top:1176.3px;font-size:28px;color:#1f5ba9;letter-spacing:0.1px;">Engagement for altadeana and pasaeana || A…</div>
<div class="a" style="left:58px;top:1275.5px;width:47.5px;height:47.5px;background:#fff;border:2px solid #cdd0d4;border-radius:8px"></div>
<div class="a" style="left:187px;top:1277px;width:75.5px;height:43.5px;background:#eff1f5;border:2px solid #cdd0d5;border-radius:22px"></div>
<div class="a" style="left:221px;top:1279px;width:40px;height:40px;background:#c5dcf6;border-radius:50%"></div>
<div class="t" style="left:336px;top:1268.3px;font-size:28px;color:#1f5ba9;letter-spacing:0.1px;">Lead Form | Scaling | Avishai 28.1.25</div>
<div class="a" style="left:58px;top:1367.5px;width:47.5px;height:47.5px;background:#fff;border:2px solid #cdd0d4;border-radius:8px"></div>
<div class="a" style="left:187px;top:1369px;width:75.5px;height:43.5px;background:#eff1f5;border:2px solid #cdd0d5;border-radius:22px"></div>
<div class="a" style="left:193px;top:1374.5px;width:32.5px;height:32.5px;background:#7b848d;border-radius:50%"></div>
<div class="t" style="left:336px;top:1360.3px;font-size:28px;color:#1f5ba9;letter-spacing:0.1px;">Web Movement 4.11.24 Avishai</div>
<div class="a" style="left:58px;top:1459.5px;width:47.5px;height:47.5px;background:#fff;border:2px solid #cdd0d4;border-radius:8px"></div>
<div class="a" style="left:187px;top:1461px;width:75.5px;height:43.5px;background:#eff1f5;border:2px solid #cdd0d5;border-radius:22px"></div>
<div class="a" style="left:221px;top:1463px;width:40px;height:40px;background:#c5dcf6;border-radius:50%"></div>
<div class="t" style="left:336px;top:1452.3px;font-size:28px;color:#1f5ba9;letter-spacing:0.1px;">Lead Form || Avishai 19.9</div>
<div class="a" style="left:58px;top:1551.5px;width:47.5px;height:47.5px;background:#fff;border:2px solid #cdd0d4;border-radius:8px"></div>
<div class="a" style="left:187px;top:1553px;width:75.5px;height:43.5px;background:#eff1f5;border:2px solid #cdd0d5;border-radius:22px"></div>
<div class="a" style="left:193px;top:1558.5px;width:32.5px;height:32.5px;background:#7b848d;border-radius:50%"></div>
<div class="t" style="left:336px;top:1544.3px;font-size:28px;color:#1f5ba9;letter-spacing:0.1px;">Lead Form | Remodel</div>
<div class="t" style="left:342.5px;top:1641.8px;font-size:28px;color:#1c2b33;letter-spacing:0.3px;">Results from 11 campaigns</div>
<svg class="a" style="left:694px;top:1643px;" width="25" height="25" viewBox="0 0 25 25"><circle cx="12.5" cy="12.5" r="12.5" fill="#1c2b33"/><circle cx="12.5" cy="7" r="2.1" fill="#fff"/><rect x="10.6" y="10.5" width="3.8" height="9.5" rx="1.2" fill="#fff"/></svg>
<div class="t" style="right:2104.5px;top:1641.8px;font-size:28px;color:#1c2b33;text-align:right;">$10,361.82</div>
<div class="t" style="right:2104.5px;top:1682.7px;font-size:24px;color:#72767b;text-align:right;letter-spacing:0.2px;-webkit-text-stroke:0.3px #72767b;">Total spent</div>
<div class="t" style="right:1812.5px;top:1641.8px;font-size:28px;color:#1c2b33;text-align:right;">9,688</div>
<div class="t" style="right:1812.5px;top:1682.7px;font-size:24px;color:#72767b;text-align:right;letter-spacing:0.2px;-webkit-text-stroke:0.3px #72767b;">Total</div>
<div class="t" style="right:1520.5px;top:1641.8px;font-size:28px;color:#1c2b33;text-align:right;">2.45%</div>
<div class="t" style="right:1520.5px;top:1682.7px;font-size:24px;color:#72767b;text-align:right;letter-spacing:0.2px;-webkit-text-stroke:0.3px #72767b;">Per Impressions</div>
<div class="t" style="right:1228.5px;top:1641.8px;font-size:28px;color:#1c2b33;text-align:right;">$1.07</div>
<div class="t" style="right:1228.5px;top:1682.7px;font-size:24px;color:#72767b;text-align:right;letter-spacing:0.2px;-webkit-text-stroke:0.3px #72767b;">Per Action</div>
<div class="t" style="right:936.5px;top:1641.8px;font-size:28px;color:#1c2b33;text-align:right;">$26.17</div>
<div class="t" style="right:936.5px;top:1682.7px;font-size:24px;color:#72767b;text-align:right;letter-spacing:0.2px;-webkit-text-stroke:0.3px #72767b;">Per 1,000 Impressions</div>
<div class="a" style="left:2730.5px;top:1653.5px;width:22px;height:3px;background:#1c2b33;border-radius:1px"></div>
<div class="a" style="left:3022.5px;top:1653.5px;width:22px;height:3px;background:#1c2b33;border-radius:1px"></div>
<div class="t" style="right:60.5px;top:1641.8px;font-size:28px;color:#1c2b33;text-align:right;border-bottom:2.5px dotted #1c2b33;line-height:0.93;">193,129</div>
<div class="t" style="left:3080px;top:1682.7px;font-size:24px;color:#72767b;letter-spacing:0.2px;-webkit-text-stroke:0.3px #72767b;">Accounts Center acc…</div>
<div class="a" style="left:348px;top:1755px;width:2019px;height:14px;background:#c2c2c2;border-radius:7px"></div>
<div class="a" style="left:1596px;top:506px;width:299px;height:577px;border:3px solid #de4222"></div>
<div class="a" style="left:2472px;top:506px;width:589px;height:577px;border:3px solid #de4222"></div>
<div class="a" style="left:0px;top:1851px;width:3398px;height:27px;background:linear-gradient(90deg,#0f1f33 0%,#13233a 16.2%,#5a2a22 19%,#6a2a1c 100%)"></div>
<div class="a" style="left:-4px;top:1853px;width:3398px;height:30px;border-radius:22px 22px 0 0;background:linear-gradient(90deg,#5f7e9f 0%,#6381a1 16.2%,#9a8090 17.6%,#d27a5c 19%,#e67a50 20.5%,#e8774e 50%,#e56f4d 80%,#e46d4c 100%)"></div>
<div class="a" style="left:11px;top:1867px;width:51px;height:20px;background:#39b8f2;border-radius:12px 12px 0 0"></div>
<div class="a" style="left:79px;top:1867px;width:51px;height:20px;background:#5a1e36;border-radius:12px 12px 0 0"></div>
<div class="a" style="left:147px;top:1867px;width:51px;height:20px;background:#e9584c;border-radius:12px 12px 0 0"></div>
<div class="a" style="left:216px;top:1867px;width:51px;height:20px;background:#1b6ff2;border-radius:12px 12px 0 0"></div>
<div class="a" style="left:284px;top:1867px;width:51px;height:20px;background:#8b7cf0;border-radius:12px 12px 0 0"></div>
<div class="a" style="left:351px;top:1867px;width:51px;height:20px;background:#ffffff;border-radius:12px 12px 0 0"></div>
<div class="a" style="left:419px;top:1867px;width:51px;height:20px;background:#f4f6f8;border-radius:12px 12px 0 0"></div>
<div class="a" style="left:487px;top:1867px;width:51px;height:20px;background:#ffffff;border-radius:12px 12px 0 0"></div>
<div class="a" style="left:555px;top:1867px;width:51px;height:20px;background:#2b1c48;border-radius:12px 12px 0 0"></div>
<div class="a" style="left:623px;top:1867px;width:51px;height:20px;background:#fbfbfb;border-radius:12px 12px 0 0"></div>
<div class="a" style="left:692px;top:1867px;width:51px;height:20px;background:#f4f7fa;border-radius:12px 12px 0 0"></div>
<div class="a" style="left:760px;top:1867px;width:51px;height:20px;background:#f06080;border-radius:12px 12px 0 0"></div>
<div class="a" style="left:828px;top:1867px;width:51px;height:20px;background:#2fc355;border-radius:12px 12px 0 0"></div>
<div class="a" style="left:896px;top:1867px;width:51px;height:20px;background:#a3a6f2;border-radius:12px 12px 0 0"></div>
<div class="a" style="left:963px;top:1867px;width:51px;height:20px;background:#ffffff;border-radius:12px 12px 0 0"></div>
<div class="a" style="left:1031px;top:1867px;width:51px;height:20px;background:#cfd2d6;border-radius:12px 12px 0 0"></div>
<div class="a" style="left:1100px;top:1867px;width:51px;height:20px;background:#ff9f0a;border-radius:12px 12px 0 0"></div>
<div class="a" style="left:1167px;top:1867px;width:51px;height:20px;background:#fafafa;border-radius:12px 12px 0 0"></div>
<div class="a" style="left:1234px;top:1867px;width:51px;height:20px;background:#ffffff;border-radius:12px 12px 0 0"></div>
<div class="a" style="left:1303px;top:1867px;width:51px;height:20px;background:#f1f1f1;border-radius:12px 12px 0 0"></div>
<div class="a" style="left:1363px;top:1867px;width:51px;height:20px;background:#f59a5a;border-radius:12px 12px 0 0"></div>
<div class="a" style="left:1436px;top:1867px;width:51px;height:20px;background:#ffd200;border-radius:12px 12px 0 0"></div>
<div class="a" style="left:1510px;top:1867px;width:51px;height:20px;background:#141414;border-radius:12px 12px 0 0"></div>
<div class="a" style="left:1578px;top:1867px;width:51px;height:20px;background:#111111;border-radius:12px 12px 0 0"></div>
<div class="a" style="left:1644px;top:1867px;width:51px;height:20px;background:#2a6be0;border-radius:12px 12px 0 0"></div>
<div class="a" style="left:1711px;top:1867px;width:51px;height:20px;background:#ffffff;border-radius:12px 12px 0 0"></div>
<div class="a" style="left:1783px;top:1867px;width:51px;height:20px;background:#6fe0b8;border-radius:12px 12px 0 0"></div>
<div class="a" style="left:1845px;top:1867px;width:51px;height:20px;background:#0f1b2e;border-radius:12px 12px 0 0"></div>
<div class="a" style="left:1915px;top:1867px;width:51px;height:20px;background:#3cc3f0;border-radius:12px 12px 0 0"></div>
<div class="a" style="left:1983px;top:1867px;width:51px;height:20px;background:#43c964;border-radius:12px 12px 0 0"></div>
<div class="a" style="left:2051px;top:1867px;width:51px;height:20px;background:#f8f9fb;border-radius:12px 12px 0 0"></div>
<div class="a" style="left:2120px;top:1867px;width:51px;height:20px;background:#ffce3a;border-radius:12px 12px 0 0"></div>
<div class="a" style="left:2187px;top:1867px;width:51px;height:20px;background:#f2f7f8;border-radius:12px 12px 0 0"></div>
<div class="a" style="left:2250px;top:1867px;width:51px;height:20px;background:#1f5fa8;border-radius:12px 12px 0 0"></div>
<div class="a" style="left:2326px;top:1867px;width:51px;height:20px;background:#3a4a66;border-radius:12px 12px 0 0"></div>
<div class="a" style="left:2390px;top:1867px;width:51px;height:20px;background:#f7f7f7;border-radius:12px 12px 0 0"></div>
<div class="a" style="left:2457px;top:1867px;width:51px;height:20px;background:#2a2a2a;border-radius:12px 12px 0 0"></div>
<div class="a" style="left:2526px;top:1867px;width:51px;height:20px;background:#e8283c;border-radius:12px 12px 0 0"></div>
<div class="a" style="left:2591px;top:1867px;width:51px;height:20px;background:#3c7a2a;border-radius:12px 12px 0 0"></div>
<div class="a" style="left:2662px;top:1867px;width:51px;height:20px;background:#ffffff;border-radius:12px 12px 0 0"></div>
<div class="a" style="left:2731px;top:1867px;width:51px;height:20px;background:#3fb543;border-radius:12px 12px 0 0"></div>
<div class="a" style="left:2798px;top:1867px;width:51px;height:20px;background:#ffffff;border-radius:12px 12px 0 0"></div>
<div class="a" style="left:2896px;top:1867px;width:51px;height:20px;background:#6d6d70;border-radius:12px 12px 0 0"></div>
<div class="a" style="left:2965px;top:1867px;width:51px;height:20px;background:#dfe4ee;border-radius:12px 12px 0 0"></div>
<div class="a" style="left:3032px;top:1867px;width:51px;height:20px;background:#b59a6a;border-radius:12px 12px 0 0"></div>
<div class="a" style="left:3126px;top:1867px;width:51px;height:20px;background:#3a8ee8;border-radius:12px 12px 0 0"></div>
<div class="a" style="left:3195px;top:1867px;width:51px;height:20px;background:#3a8ee8;border-radius:12px 12px 0 0"></div>
<div class="a" style="left:3266px;top:1867px;width:51px;height:20px;background:#f3f3f3;border-radius:12px 12px 0 0"></div>
<div class="a" style="left:3337px;top:1867px;width:51px;height:20px;background:#d9dada;border-radius:12px 12px 0 0"></div>
<div class="a" style="left:2873px;top:1866px;width:2px;height:12px;background:#b65a3e"></div>
<div class="a" style="left:3108px;top:1866px;width:2px;height:12px;background:#b65a3e"></div>
</body></html>
